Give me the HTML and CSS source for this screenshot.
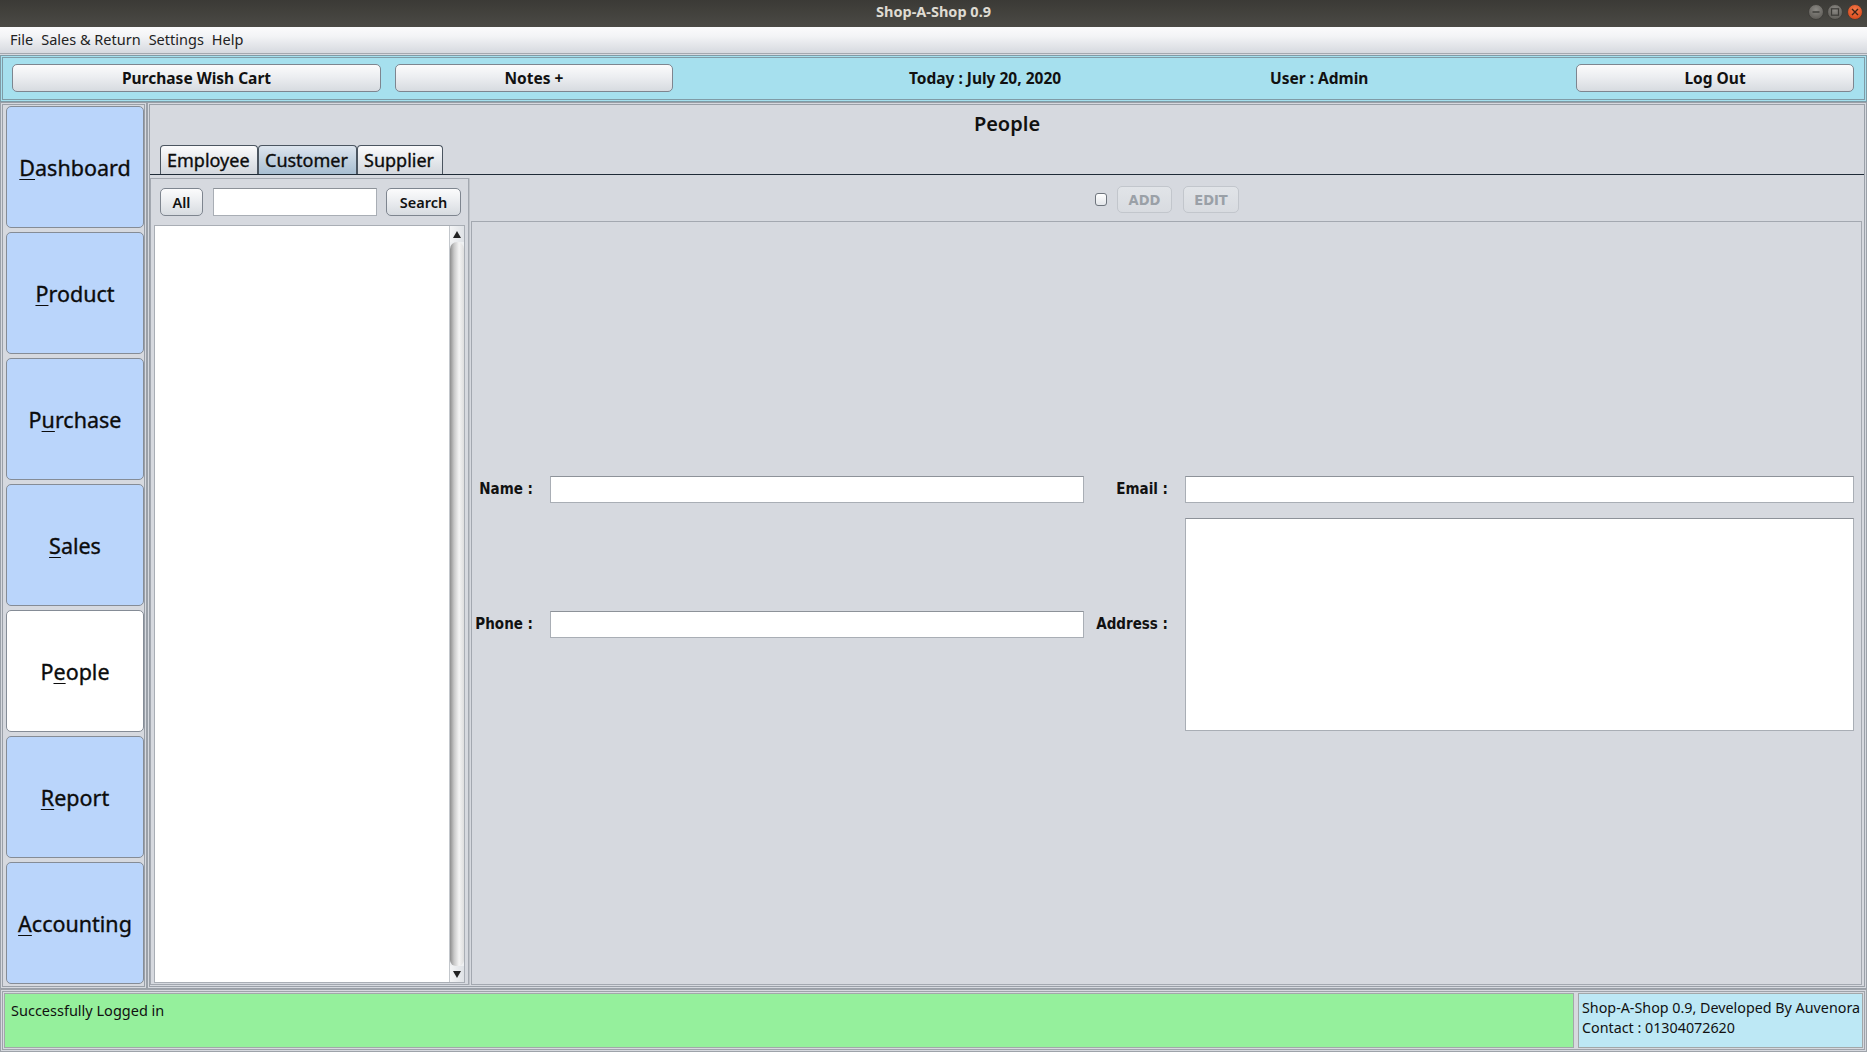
FILE: index.html
```html
<!DOCTYPE html>
<html>
<head>
<meta charset="utf-8">
<title>Shop-A-Shop 0.9</title>
<link rel="stylesheet" href="styles.css">
</head>
<body>
<div class="window">
  <div class="titlebar">
    <div class="tb-side"></div>
    <div class="tb-title">Shop-A-Shop 0.9</div>
    <div class="tb-side tb-controls">
      <svg width="56" height="18" viewBox="0 0 56 18">
        <defs>
          <radialGradient id="g1" cx="50%" cy="35%" r="65%">
            <stop offset="0" stop-color="#8c8a85"/>
            <stop offset="1" stop-color="#5d5b56"/>
          </radialGradient>
          <radialGradient id="g2" cx="50%" cy="35%" r="65%">
            <stop offset="0" stop-color="#f47a4a"/>
            <stop offset="1" stop-color="#d8481a"/>
          </radialGradient>
        </defs>
        <circle cx="8" cy="9" r="7.5" fill="url(#g1)" stroke="#3a3935" stroke-width="0.8"/>
        <line x1="4.5" y1="9" x2="11.5" y2="9" stroke="#3c3b37" stroke-width="1.4"/>
        <circle cx="27" cy="9" r="7.5" fill="url(#g1)" stroke="#3a3935" stroke-width="0.8"/>
        <rect x="23.5" y="5.8" width="7" height="6.4" fill="none" stroke="#3c3b37" stroke-width="1.2"/>
        <circle cx="47" cy="9" r="7.5" fill="url(#g2)" stroke="#3a3935" stroke-width="0.8"/>
        <path d="M44 6 L50 12 M50 6 L44 12" stroke="#3c2418" stroke-width="1.4"/>
      </svg>
    </div>
  </div>

  <div class="menubar">
    <span class="menu-item">File</span>
    <span class="menu-item">Sales &amp; Return</span>
    <span class="menu-item">Settings</span>
    <span class="menu-item">Help</span>
  </div>

  <div class="toolbar">
    <button class="btn btn-wish">Purchase Wish Cart</button>
    <button class="btn btn-notes">Notes +</button>
    <div class="info info-today">Today : July 20, 2020</div>
    <div class="info info-user">User : Admin</div>
    <button class="btn btn-logout">Log Out</button>
  </div>

  <div class="main">
    <nav class="sidebar">
      <div class="navbtn"><u>D</u>ashboard</div>
      <div class="navbtn"><u>P</u>roduct</div>
      <div class="navbtn">P<u>u</u>rchase</div>
      <div class="navbtn"><u>S</u>ales</div>
      <div class="navbtn active">P<u>e</u>ople</div>
      <div class="navbtn"><u>R</u>eport</div>
      <div class="navbtn"><u>A</u>ccounting</div>
    </nav>

    <section class="content">
      <div class="page-title">People</div>
      <div class="tabs">
        <div class="tab">Employee</div>
        <div class="tab active">Customer</div>
        <div class="tab">Supplier</div>
      </div>
      <div class="tab-body">
        <div class="list-panel">
          <div class="search-row">
            <button class="btn btn-small btn-all">All</button>
            <div class="field search-field"></div>
            <button class="btn btn-small btn-search">Search</button>
          </div>
          <div class="list">
            <div class="list-area"></div>
            <div class="vscroll">
              <div class="arrow arrow-up"></div>
              <div class="thumb"></div>
              <div class="arrow arrow-down"></div>
            </div>
          </div>
        </div>

        <div class="detail-panel">
          <div class="detail-actions">
            <span class="checkbox"></span>
            <button class="btn btn-disabled">ADD</button>
            <button class="btn btn-disabled">EDIT</button>
          </div>
          <div class="form-panel">
            <div class="form">
              <div class="flabel">Name :</div>
              <div class="field f-line"></div>
              <div class="flabel">Email :</div>
              <div class="field f-line"></div>
              <div class="flabel">Phone :</div>
              <div class="field f-line"></div>
              <div class="flabel">Address :</div>
              <div class="field f-area"></div>
            </div>
          </div>
        </div>
      </div>
    </section>
  </div>

  <div class="statusbar">
    <div class="status-msg">Successfully Logged in</div>
    <div class="status-info">Shop-A-Shop 0.9, Developed By Auvenora<br>Contact : 01304072620</div>
  </div>
</div>
</body>
</html>
```

FILE: styles.css
```css
* { box-sizing: border-box; }

html, body {
  margin: 0;
  padding: 0;
  width: 1867px;
  height: 1052px;
  overflow: hidden;
  background: #d6d9df;
  font-family: "Noto Sans", "Open Sans", sans-serif;
  color: #111;
}

.window {
  display: flex;
  flex-direction: column;
  width: 1867px;
  height: 1052px;
}

/* ---------- title bar ---------- */
.titlebar {
  height: 27px;
  flex: none;
  display: grid;
  grid-template-columns: 1fr auto 1fr;
  align-items: start;
  background: linear-gradient(#3b3a36, #4b4a45);
}
.tb-title {
  color: #dfdbd2;
  font-weight: bold;
  font-size: 14.5px;
  line-height: 23px;
}
.tb-controls {
  display: flex;
  justify-content: flex-end;
  padding-right: 3px;
  padding-top: 3px;
}
.tb-controls svg { display: block; }

/* ---------- menu bar ---------- */
.menubar {
  height: 27px;
  flex: none;
  display: flex;
  align-items: center;
  gap: 8px;
  padding-left: 10px;
  padding-bottom: 2px;
  background: linear-gradient(#fbfbfc, #f3f4f6 35%, #d6d9df);
  border-bottom: 1px solid #a4a8af;
  font-size: 14.5px;
  color: #222;
}

/* ---------- tool bar ---------- */
.toolbar {
  height: 47px;
  flex: none;
  margin-top: 1px;
  border: 3px double #7f9ba6;
  background: #a6e0ee;
  display: flex;
  align-items: center;
  padding: 0 10px 1px 9px;
}

.btn {
  font-family: "Noto Sans", "Open Sans", sans-serif;
  border: 1px solid #7e858f;
  border-radius: 5px;
  background: linear-gradient(#fbfbfc, #eceef1 45%, #d7dbe0);
  color: #111;
  padding: 0;
  cursor: default;
}

.toolbar .btn {
  height: 28px;
  font-weight: bold;
  font-size: 15.5px;
  line-height: 24px;
}
.btn-wish { width: 369px; }
.btn-notes { width: 278px; margin-left: 14px; }
.btn-logout { width: 278px; margin-left: auto; }

.info {
  font-weight: bold;
  font-size: 15.5px;
  text-align: center;
  white-space: nowrap;
}
.info-today { width: 570px; margin-left: 27px; }
.info-user { width: 96px; }

/* ---------- main ---------- */
.main {
  flex: 1;
  display: flex;
  min-height: 0;
}

.sidebar {
  width: 147px;
  flex: none;
  border: 3px double #9aa0a8;
  padding: 1px 0 0 3px;
  display: flex;
  flex-direction: column;
  gap: 4px;
}

.navbtn {
  width: 138px;
  height: 122px;
  flex: none;
  background: #bad5fb;
  border: 1px solid #858c96;
  border-radius: 5px;
  display: flex;
  align-items: center;
  justify-content: center;
  font-size: 21.5px;
  color: #0c0c0c;
  -webkit-text-stroke: 0.35px #0c0c0c;
}
.navbtn u { text-underline-offset: 3px; text-decoration-thickness: 1px; }
.navbtn.active { background: #ffffff; }

.content {
  flex: 1;
  border: 3px double #9aa0a8;
  display: flex;
  flex-direction: column;
  min-width: 0;
}

.page-title {
  height: 38px;
  line-height: 38px;
  text-align: center;
  font-size: 20px;
  font-weight: 600;
  color: #111;
}

.tabs {
  margin-top: 2px;
  height: 30px;
  display: flex;
  align-items: flex-end;
  padding-left: 10px;
  border-bottom: 1px solid #1f2b37;
}
.tab {
  height: 29px;
  padding: 0 6px;
  border: 1px solid #4b5560;
  border-bottom: none;
  border-radius: 4px 4px 0 0;
  background: linear-gradient(#fbfbfc, #e6e9ed 50%, #d3d7dd);
  font-size: 18px;
  line-height: 28px;
  color: #0c0c0c;
  -webkit-text-stroke: 0.35px #0c0c0c;
  white-space: nowrap;
}
.tab:nth-child(1) { width: 98px; }
.tab:nth-child(2) { width: 99px; }
.tab:nth-child(3) { width: 86px; }
.tab.active {
  background: linear-gradient(#dde5ee, #c2d1df 50%, #a8bed1);
}

.tab-body {
  flex: 1;
  display: flex;
  padding-top: 3px;
  padding-bottom: 1px;
  min-height: 0;
}

.list-panel {
  width: 319px;
  flex: none;
  border: 1px solid #a3a8b0;
  display: flex;
  flex-direction: column;
  padding: 9px 3px 1px 3px;
}

.search-row {
  height: 28px;
  display: flex;
  align-items: center;
  padding-left: 6px;
}
.btn-small {
  height: 28px;
  font-weight: 600;
  font-size: 14.5px;
  line-height: 24px;
}
.btn-all { width: 43px; }
.search-field { width: 164px; height: 28px; margin-left: 10px; }
.btn-search { width: 75px; margin-left: 9px; }

.field {
  background: #ffffff;
  border: 1px solid #a9aeb5;
  border-top-color: #8d9299;
}

.list {
  flex: 1;
  margin-top: 9px;
  display: flex;
  border: 1px solid #a9aeb5;
  background: #ffffff;
}
.list-area { flex: 1; }

.vscroll {
  width: 15px;
  flex: none;
  display: flex;
  flex-direction: column;
  background: #eef0f2;
  border-left: 1px solid #c3c7cc;
}
.arrow {
  height: 16px;
  flex: none;
  position: relative;
  background: linear-gradient(to right, #f4f5f6, #dfe2e6);
}
.arrow::after {
  content: "";
  position: absolute;
  left: 3px;
  width: 0;
  height: 0;
  border-left: 4px solid transparent;
  border-right: 4px solid transparent;
}
.arrow-up::after { top: 5px; border-bottom: 7px solid #222; }
.arrow-down::after { top: 5px; border-top: 7px solid #222; }
.thumb {
  flex: 1;
  border-radius: 7px 7px 6px 6px;
  background: linear-gradient(to right, #8e8e8e, #c9c9c9 30%, #f4f4f4 65%, #dedede);
}

.detail-panel {
  flex: 1;
  display: flex;
  flex-direction: column;
  border-left: 1px solid #bfc3c9;
  min-width: 0;
}
.detail-actions {
  height: 43px;
  flex: none;
  display: flex;
  align-items: center;
  justify-content: center;
}
.checkbox {
  width: 12px;
  height: 13px;
  border: 1px solid #6f757d;
  border-radius: 3px;
  background: linear-gradient(#ffffff, #e3e6ea);
  margin-right: 10px;
}
.btn-disabled {
  height: 27px;
  border-color: #c2c6cc;
  background: linear-gradient(#e1e4e8, #d8dbe0);
  color: #9aa0a7;
  font-family: "DejaVu Sans Condensed", "Liberation Sans Narrow", sans-serif;
  font-weight: bold;
  font-size: 14.5px;
}
.btn-disabled:nth-of-type(1) { width: 55px; }
.btn-disabled:nth-of-type(2) { width: 56px; margin-left: 11px; }

.form-panel {
  flex: 1;
  margin: 0 2px 0 1px;
  border: 1px solid #a3a8b0;
  display: flex;
  align-items: center;
}
.form {
  display: grid;
  grid-template-columns: 78px 534px 101px 669px;
  grid-template-rows: 27px 213px;
  row-gap: 15px;
}
.flabel {
  align-self: center;
  text-align: right;
  padding-right: 17px;
  font-family: "DejaVu Sans Condensed", "Liberation Sans Narrow", sans-serif;
  font-weight: bold;
  font-size: 15px;
  color: #111;
  white-space: nowrap;
}
.f-line { height: 27px; align-self: center; }
.f-area { height: 213px; }

/* ---------- status bar ---------- */
.statusbar {
  height: 63px;
  flex: none;
  border: 3px double #9ea3aa;
  padding: 1px;
  display: flex;
  gap: 4px;
}
.status-msg {
  width: 1570px;
  flex: none;
  background: #95f09c;
  border: 1px solid #a2a7a9;
  padding: 6px 0 0 6px;
  font-size: 14.5px;
  line-height: 20px;
  color: #111;
}
.status-info {
  flex: 1;
  background: #bde8f5;
  border: 1px solid #a2a7a9;
  padding: 4px 0 0 3px;
  font-size: 14.3px;
  line-height: 20px;
  color: #111;
  white-space: nowrap;
}
```
